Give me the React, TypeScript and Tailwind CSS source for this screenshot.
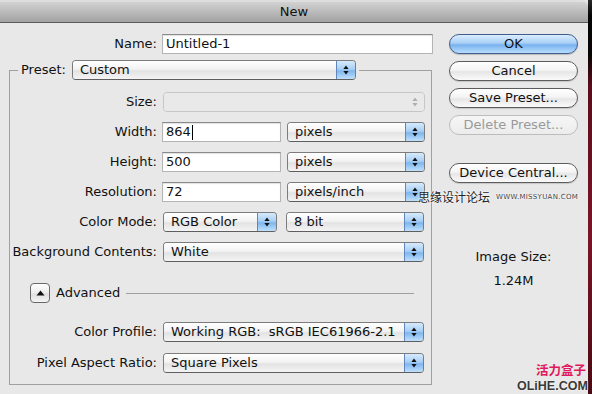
import type { ReactNode } from "react";

const ui = "font-['DejaVu_Sans',sans-serif] text-[13px] leading-[16px] text-[#111]";

function Arrows({ dim }: { dim?: boolean }) {
  const c = dim ? "#b0b0b0" : "#111";
  return (
    <svg width="6" height="12" viewBox="0 0 6 12">
      <path d="M3 1.5 L5.6 5 L0.4 5 Z" fill={c} />
      <path d="M3 10.5 L5.6 7 L0.4 7 Z" fill={c} />
    </svg>
  );
}

function Select({ className, value, disabled }: { className: string; value?: string; disabled?: boolean }) {
  return (
    <div
      className={`flex h-[20px] overflow-hidden rounded-[4px] border ${
        disabled ? "border-[#c6c6c6]" : "border-[#7c7c7c] border-b-[#5e5e5e]"
      } ${className}`}
    >
      <div
        className={`flex flex-1 items-center whitespace-pre pl-[7px] ${
          disabled
            ? "bg-[#e9e9e9]"
            : "bg-[linear-gradient(#ffffff,#f3f3f3_45%,#e3e3e3_55%,#f4f4f4)]"
        }`}
      >
        {value}
      </div>
      {disabled ? (
        <div className="flex w-[19px] items-center justify-center bg-[#e9e9e9]">
          <Arrows dim />
        </div>
      ) : (
        <div className="flex w-[19px] items-center justify-center border-l border-[#5f86bd] bg-[linear-gradient(#d6eafd,#a9cff4_45%,#7fb6ed_55%,#bfe0fd)]">
          <Arrows />
        </div>
      )}
    </div>
  );
}

function Field({ className, value, caret }: { className: string; value: string; caret?: boolean }) {
  return (
    <div
      className={`flex h-[20px] items-center border border-[#b4b4b4] border-t-[#8a8a8a] bg-white pl-[3px] shadow-[inset_0_1px_1px_rgba(0,0,0,0.12)] ${className}`}
    >
      {value}
      {caret && <span className="ml-[1px] inline-block h-[15px] w-px bg-black" />}
    </div>
  );
}

function Row({ label, children }: { label: string; children: ReactNode }) {
  return (
    <div className="flex h-[20px] items-center">
      <div className="w-[147px] shrink-0 text-right">{label}</div>
      <div className="ml-[5px] flex items-center gap-[6px]">{children}</div>
    </div>
  );
}

function Btn({ children, primary, disabled }: { children: ReactNode; primary?: boolean; disabled?: boolean }) {
  let look =
    "border-[#5c5c5c] bg-[linear-gradient(#ffffff,#f4f4f4_45%,#e6e6e6_55%,#fafafa)] shadow-[0_1px_1px_rgba(0,0,0,0.15)]";
  if (primary)
    look =
      "border-[#3f5e8e] bg-[linear-gradient(#dcedfd,#a8d0f6_45%,#78b2ee_55%,#b8defe)] shadow-[0_1px_1px_rgba(0,0,0,0.2)]";
  if (disabled) look = "border-[#bdbdbd] bg-[linear-gradient(#f6f6f6,#ececec)] text-[#9a9a9a]";
  return (
    <div className={`flex h-[20px] w-[129px] items-center justify-center rounded-full border ${look}`}>
      {children}
    </div>
  );
}

export default function App() {
  return (
    <div className={`relative flex h-[394px] w-[592px] overflow-hidden bg-[#e8e8e8] ${ui}`}>
      <div className="flex w-[588px] flex-col">
        <div className="flex h-[23px] items-center justify-center rounded-tr-[6px] border-b border-[#5a5a5a] border-t-2 border-t-[#dedede] bg-[linear-gradient(#d2d2d2,#a2a2a2)]">
          New
        </div>

        <div className="flex pt-[11px]">
          <div className="w-[440px]">
            <div className="flex h-[20px] items-center">
              <div className="w-[157px] text-right">Name:</div>
              <Field className="ml-[5px] w-[271px]" value="Untitled-1" />
            </div>

            <fieldset className="ml-[9px] mt-[6px] w-[423px] border border-[#a0a0a0] pb-[11px]">
              <legend className="ml-[8px] flex h-[20px] items-center px-[3px]">
                <span>Preset:</span>
                <Select className="ml-[6px] w-[284px]" value="Custom" />
              </legend>

              <div className="mt-[12px] flex flex-col gap-[10px]">
                <Row label="Size:">
                  <Select className="ml-[1px] w-[262px]" disabled />
                </Row>
                <Row label="Width:">
                  <Field className="w-[119px]" value="864" caret />
                  <Select className="w-[138px]" value="pixels" />
                </Row>
                <Row label="Height:">
                  <Field className="w-[119px]" value="500" />
                  <Select className="w-[138px]" value="pixels" />
                </Row>
                <Row label="Resolution:">
                  <Field className="w-[119px]" value="72" />
                  <Select className="w-[138px]" value="pixels/inch" />
                </Row>
                <Row label="Color Mode:">
                  <Select className="ml-[1px] w-[114px]" value="RGB Color" />
                  <Select className="ml-[3px] w-[138px]" value="8 bit" />
                </Row>
                <Row label="Background Contents:">
                  <Select className="ml-[1px] w-[261px]" value="White" />
                </Row>
              </div>

              <div className="ml-[20px] mt-[21px] flex h-[20px] items-center">
                <div className="flex h-[20px] w-[20px] items-center justify-center rounded-[4px] border border-[#6a6a6a] bg-[linear-gradient(#ffffff,#ececec_50%,#dedede_55%,#f5f5f5)]">
                  <svg width="9" height="6" viewBox="0 0 9 6">
                    <path d="M4.5 0.5 L8.5 5.5 L0.5 5.5 Z" fill="#111" />
                  </svg>
                </div>
                <span className="ml-[6px]">Advanced</span>
                <div className="ml-[6px] mr-[17px] h-px flex-1 bg-[#a0a0a0]" />
              </div>

              <div className="mt-[19px] flex flex-col gap-[11px]">
                <Row label="Color Profile:">
                  <Select className="ml-[1px] w-[261px]" value="Working RGB:  sRGB IEC61966-2.1" />
                </Row>
                <Row label="Pixel Aspect Ratio:">
                  <Select className="ml-[1px] w-[261px]" value="Square Pixels" />
                </Row>
              </div>
            </fieldset>
          </div>

          <div className="ml-[9px] flex w-[129px] flex-col">
            <div className="flex flex-col gap-[7px]">
              <Btn primary>OK</Btn>
              <Btn>Cancel</Btn>
              <Btn>Save Preset...</Btn>
              <Btn disabled>Delete Preset...</Btn>
            </div>
            <div className="mt-[28px]">
              <Btn>Device Central...</Btn>
            </div>
            <div className="mt-[66px] text-center">Image Size:</div>
            <div className="mt-[8px] text-center">1.24M</div>
          </div>
        </div>
      </div>

      <div className="w-[4px] bg-[linear-gradient(#2a2a2a,#050505_4%,#0a0505_14%,#5a0d1c_22%,#7a1426_60%,#4a0a14)]" />

      <div className="absolute left-[418px] top-[189px] flex items-center whitespace-nowrap [text-shadow:0_0_2px_#fff,0_0_2px_#fff]">
        <span className="font-['Noto_Sans_CJK_SC',sans-serif] text-[12px] leading-[16px] text-[#222]">思缘设计论坛</span>
        <span className="ml-[6px] font-['DejaVu_Sans',sans-serif] text-[7px] tracking-[0.3px] text-[#444]">WWW.MISSYUAN.COM</span>
      </div>

      <div className="absolute left-[536px] top-[363px] whitespace-nowrap font-['Noto_Sans_CJK_SC',sans-serif] text-[12.5px] font-bold leading-[14px] text-[#e0185c]">
        活力盒子
      </div>
      <div className="absolute left-[517px] top-[380px] whitespace-nowrap font-['Liberation_Sans',sans-serif] text-[12.5px] font-bold leading-[12px] text-[#3a3a3a] [text-shadow:0_0_2px_#fff]">
        OLiHE.COM
      </div>
    </div>
  );
}
